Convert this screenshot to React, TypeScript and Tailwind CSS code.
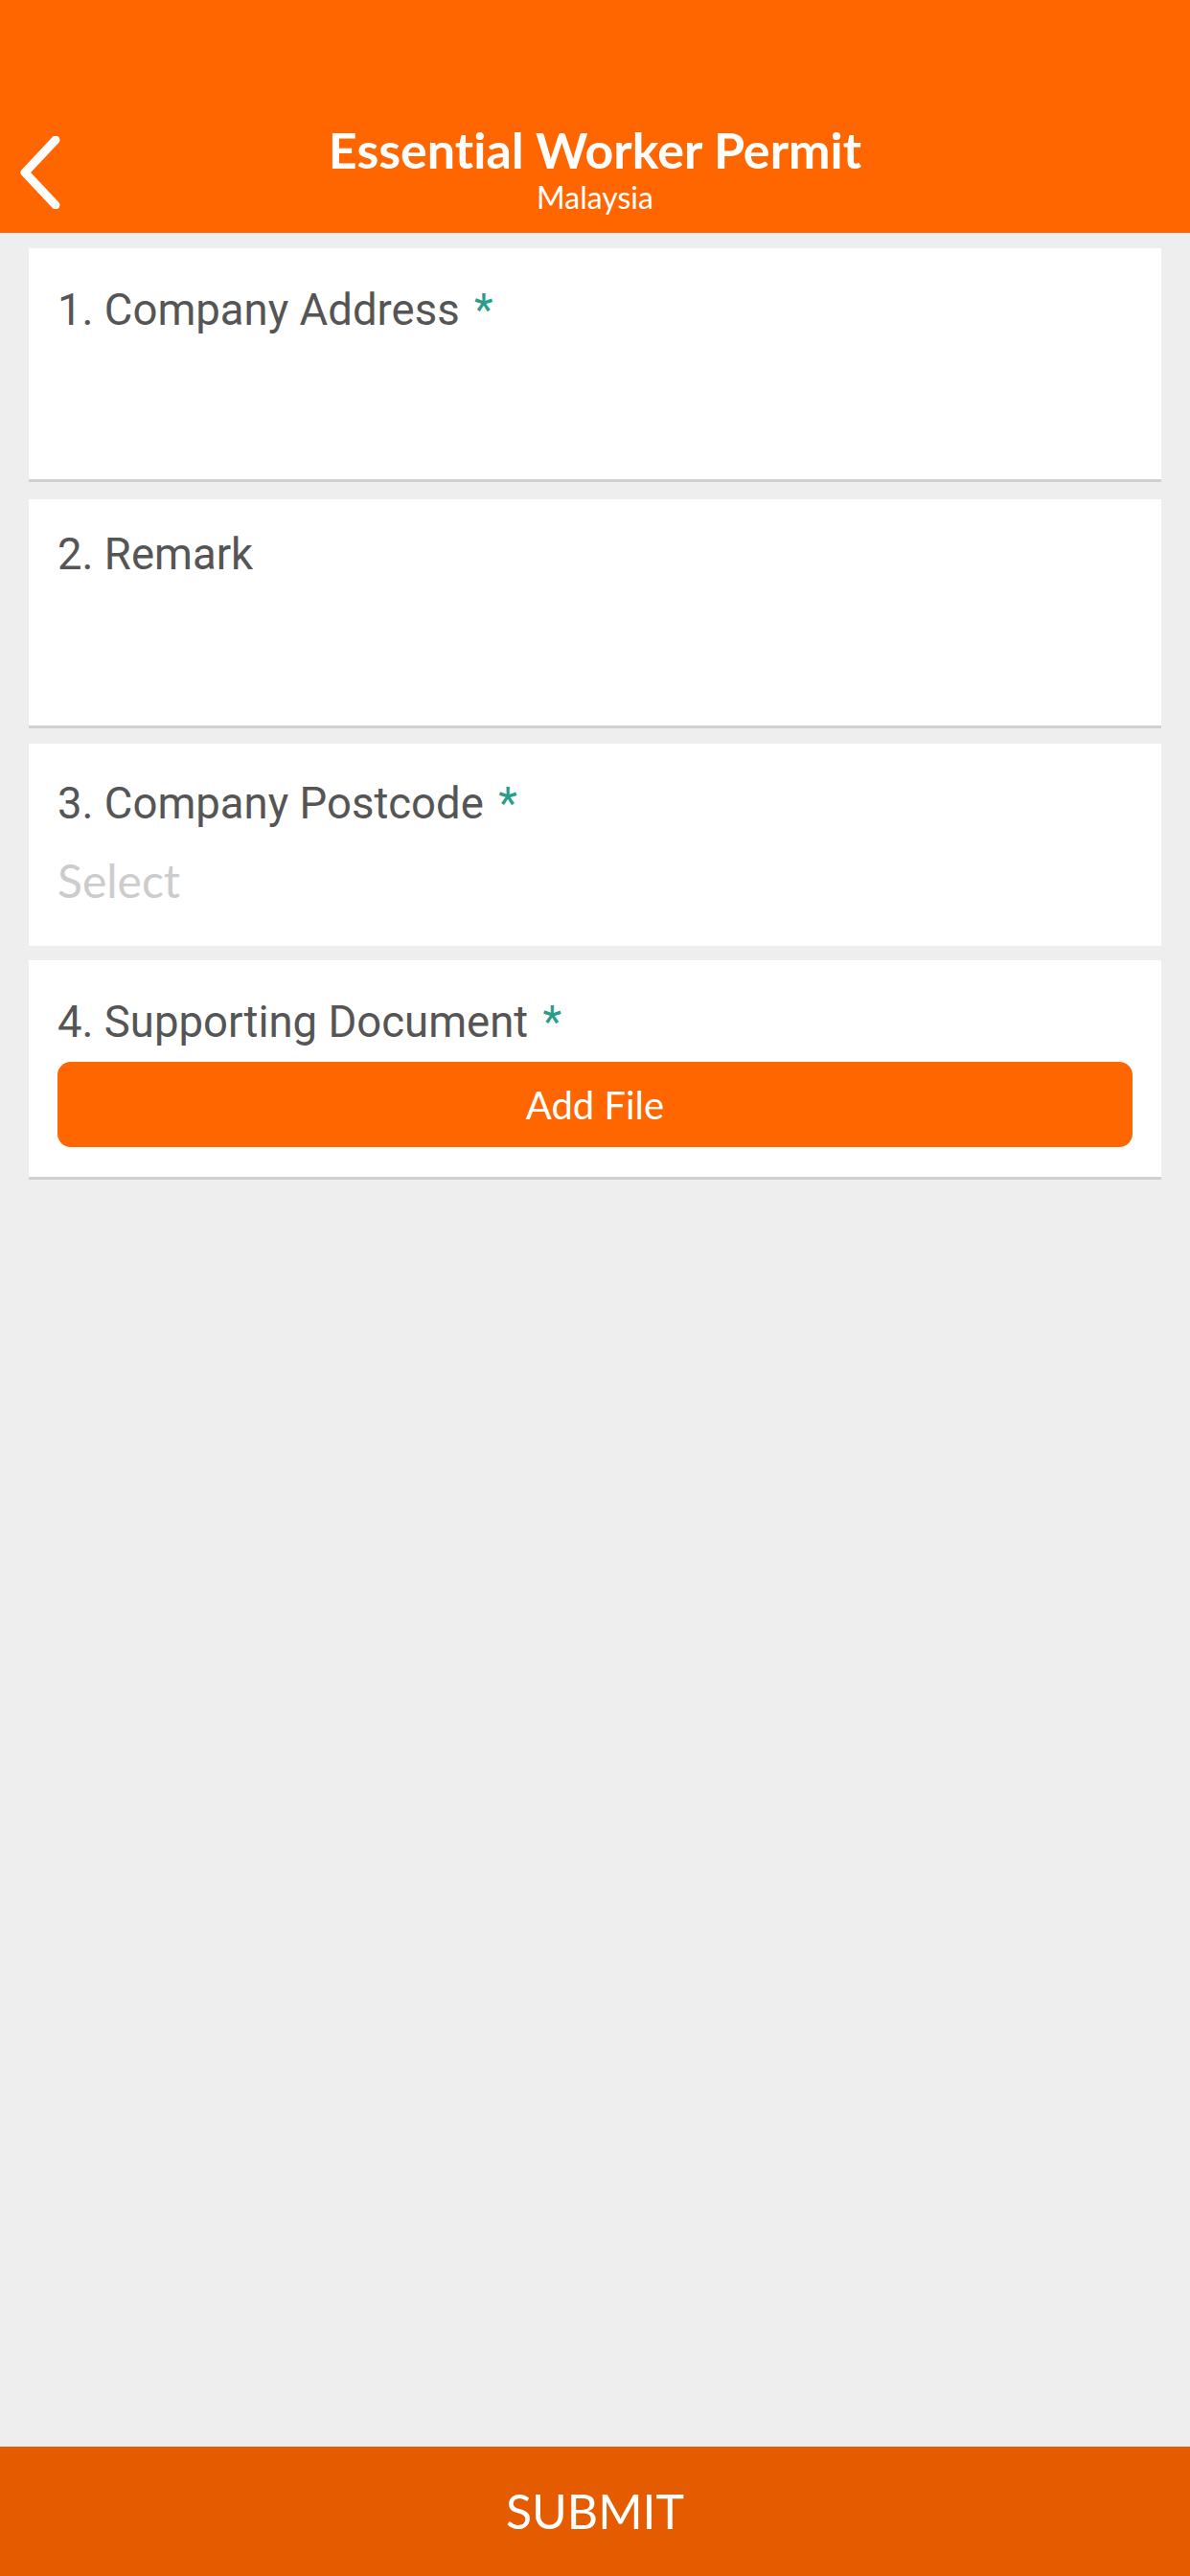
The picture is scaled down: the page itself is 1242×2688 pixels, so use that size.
const lato = "font-['Lato','Liberation_Sans',sans-serif] [font-variant-ligatures:none]";
const roboto = "font-['Roboto','Liberation_Sans',sans-serif]";

function Label({ text, required }: { text: string; required?: boolean }) {
  return (
    <p className={`${roboto} text-[45.5px] leading-[54px] text-[#555555]`}>
      {text}
      {required && <span className="ml-[4px] text-[#2a9d8a]"> *</span>}
    </p>
  );
}

function BackChevron() {
  return (
    <svg width="48" height="76" viewBox="0 0 48 76" fill="none" aria-hidden="true">
      <polyline
        points="38,4 6,38 38,72"
        stroke="#ffffff"
        strokeWidth="9"
        strokeLinecap="round"
        strokeLinejoin="round"
      />
    </svg>
  );
}

export default function App() {
  return (
    <div className="flex min-h-[2688px] flex-col bg-[#eeeeee]">
      <header className="h-[243px] bg-[#ff6600] pt-[125px]">
        <div className="grid grid-cols-[120px_1fr_120px] items-start">
          <button className="mt-[17px] pl-[20px] text-left">
            <BackChevron />
          </button>
          <div className={`${lato} text-center text-white`}>
            <h1 className="text-[52px] font-bold leading-[62px]">Essential Worker Permit</h1>
            <p className="text-[32px] leading-[38px]">Malaysia</p>
          </div>
          <div />
        </div>
      </header>

      <main className="flex flex-1 flex-col gap-[18px] px-[30px] pt-[16px]">
        <section className="h-[244px] border-b-[3px] border-[#d0d0d0] bg-white px-[30px] pt-[38px]">
          <Label text="1. Company Address" required />
        </section>

        <section className="h-[239px] border-b-[3px] border-[#d0d0d0] bg-white px-[30px] pt-[31px]">
          <Label text="2. Remark" />
        </section>

        <section className="-mt-[2px] bg-white px-[30px] pb-[39px] pt-[36px]">
          <Label text="3. Company Postcode" required />
          <p className={`${lato} mt-[24px] text-[48px] leading-[58px] text-[#cccccc]`}>Select</p>
        </section>

        <section className="-mt-[3px] border-b-[3px] border-[#d0d0d0] bg-white px-[30px] pb-[31px] pt-[38px]">
          <Label text="4. Supporting Document" required />
          <button
            className={`${lato} mt-[14px] flex h-[89px] w-full items-center justify-center rounded-[14px] bg-[#ff6600] text-[40px] text-white`}
          >
            Add File
          </button>
        </section>
      </main>

      <footer className="flex h-[135px] items-center justify-center bg-[#e55b00]">
        <span className={`${lato} text-[50px] text-white`}>SUBMIT</span>
      </footer>
    </div>
  );
}
